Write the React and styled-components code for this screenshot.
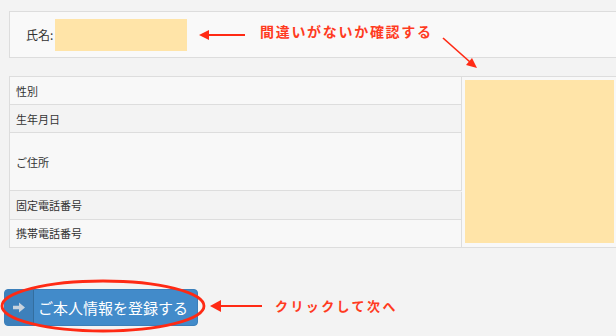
import React from "react";
import styled, { createGlobalStyle } from "styled-components";

const GlobalStyle = createGlobalStyle`
  html, body {
    margin: 0;
    padding: 0;
    background: #f3f3f3;
    font-family: "Noto Sans CJK JP", "Noto Sans", sans-serif;
    color: #333;
    overflow: hidden;
  }
`;

const Page = styled.div`
  position: relative;
  width: 616px;
  height: 336px;
  padding-top: 11px;
  box-sizing: border-box;
`;

const NamePanel = styled.div`
  margin-left: 9px;
  width: 620px;
  height: 47px;
  box-sizing: border-box;
  border: 1px solid #dddddd;
  background: #f9f9f9;
  display: flex;
  align-items: center;
  padding-left: 16px;
  font-size: 12px;
`;

const Masked = styled.div`
  background: #ffe4a8;
  width: ${(p) => p.$w};
  height: ${(p) => p.$h};
  margin-left: ${(p) => p.$ml || "0"};
`;

const Table = styled.div`
  margin: 18px 0 0 9px;
  width: 620px;
  display: grid;
  grid-template-columns: 452px 1fr;
  border-top: 1px solid #dddddd;
  border-left: 1px solid #dddddd;
`;

const LabelCell = styled.div`
  grid-column: 1;
  height: ${(p) => p.$h}px;
  box-sizing: border-box;
  border-bottom: 1px solid #dddddd;
  border-right: 1px solid #dddddd;
  background: ${(p) => (p.$alt ? "#f3f3f3" : "#f8f8f8")};
  display: flex;
  align-items: center;
  padding-left: 6px;
  font-size: 11px;
  color: #333;
`;

const ValueCell = styled.div`
  grid-column: 2;
  grid-row: 1 / span 5;
  background: #f8f8f8;
  border-bottom: 1px solid #dddddd;
  padding: 3px 2px 4px 3px;
  display: flex;
`;

const ButtonRow = styled.div`
  margin: 41px 0 0 4px;
`;

const SubmitButton = styled.button`
  display: flex;
  align-items: stretch;
  width: 194px;
  height: 37px;
  padding: 0;
  border: 1px solid #3b7fba;
  border-radius: 4px;
  background: #428bca;
  overflow: hidden;
  cursor: pointer;
  font-family: inherit;
`;

const IconPart = styled.span`
  width: 28px;
  background: #3d80bb;
  border-right: 1px solid #336e9f;
  display: flex;
  align-items: center;
  justify-content: center;
`;

const ButtonLabel = styled.span`
  display: flex;
  align-items: center;
  padding-left: 4px;
  color: #ffffff;
  font-size: 15px;
  white-space: nowrap;
`;

const Overlay = styled.svg`
  position: absolute;
  left: 0;
  top: 0;
  pointer-events: none;
`;

const Note = styled.div`
  position: absolute;
  left: ${(p) => p.$x}px;
  top: ${(p) => p.$y}px;
  color: #ff3b1f;
  font-weight: bold;
  font-size: ${(p) => p.$size}px;
  letter-spacing: ${(p) => p.$ls}px;
  white-space: nowrap;
  line-height: 1;
`;

const rows = [
  { label: "性別", h: 28 },
  { label: "生年月日", h: 28, alt: true },
  { label: "ご住所", h: 58 },
  { label: "固定電話番号", h: 28, alt: true },
  { label: "携帯電話番号", h: 28 },
];

const red = "#ff2a14";

const App = () => {
  return (
    <>
      <GlobalStyle />
      <Page>
        <NamePanel>
          氏名:
          <Masked $w="132px" $h="32px" $ml="2px" />
        </NamePanel>

        <Table>
          {rows.map((r, i) => (
            <LabelCell key={r.label} $h={r.h} $alt={r.alt} style={{ gridRow: i + 1 }}>
              {r.label}
            </LabelCell>
          ))}
          <ValueCell>
            <Masked $w="149px" $h="163px" />
          </ValueCell>
        </Table>

        <ButtonRow>
          <SubmitButton>
            <IconPart>
              <svg width="12" height="11" viewBox="0 0 12 11">
                <path d="M0 3.8h6V0.5l6 5-6 5V7.2H0z" fill="#c9d3dd" />
              </svg>
            </IconPart>
            <ButtonLabel>ご本人情報を登録する</ButtonLabel>
          </SubmitButton>
        </ButtonRow>

        <Overlay width="616" height="336" viewBox="0 0 616 336">
          <line x1="245" y1="35" x2="207" y2="35" stroke={red} strokeWidth="2" />
          <path d="M199 35l10-5v10z" fill={red} />
          <line x1="443" y1="38" x2="470" y2="62" stroke={red} strokeWidth="1.6" />
          <path d="M477 68l-11-3 6-7z" fill={red} />
          <ellipse cx="103" cy="306" rx="101" ry="25" fill="none" stroke={red} strokeWidth="2.8" />
          <line x1="262" y1="306" x2="219" y2="306" stroke={red} strokeWidth="2" />
          <path d="M210 306l11-6v12z" fill={red} />
        </Overlay>

        <Note $x={260} $y={24} $size={14} $ls={1.7}>
          間違いがないか確認する
        </Note>
        <Note $x={275} $y={299} $size={13} $ls={2.4}>
          クリックして次へ
        </Note>
      </Page>
    </>
  );
};

export default App;
